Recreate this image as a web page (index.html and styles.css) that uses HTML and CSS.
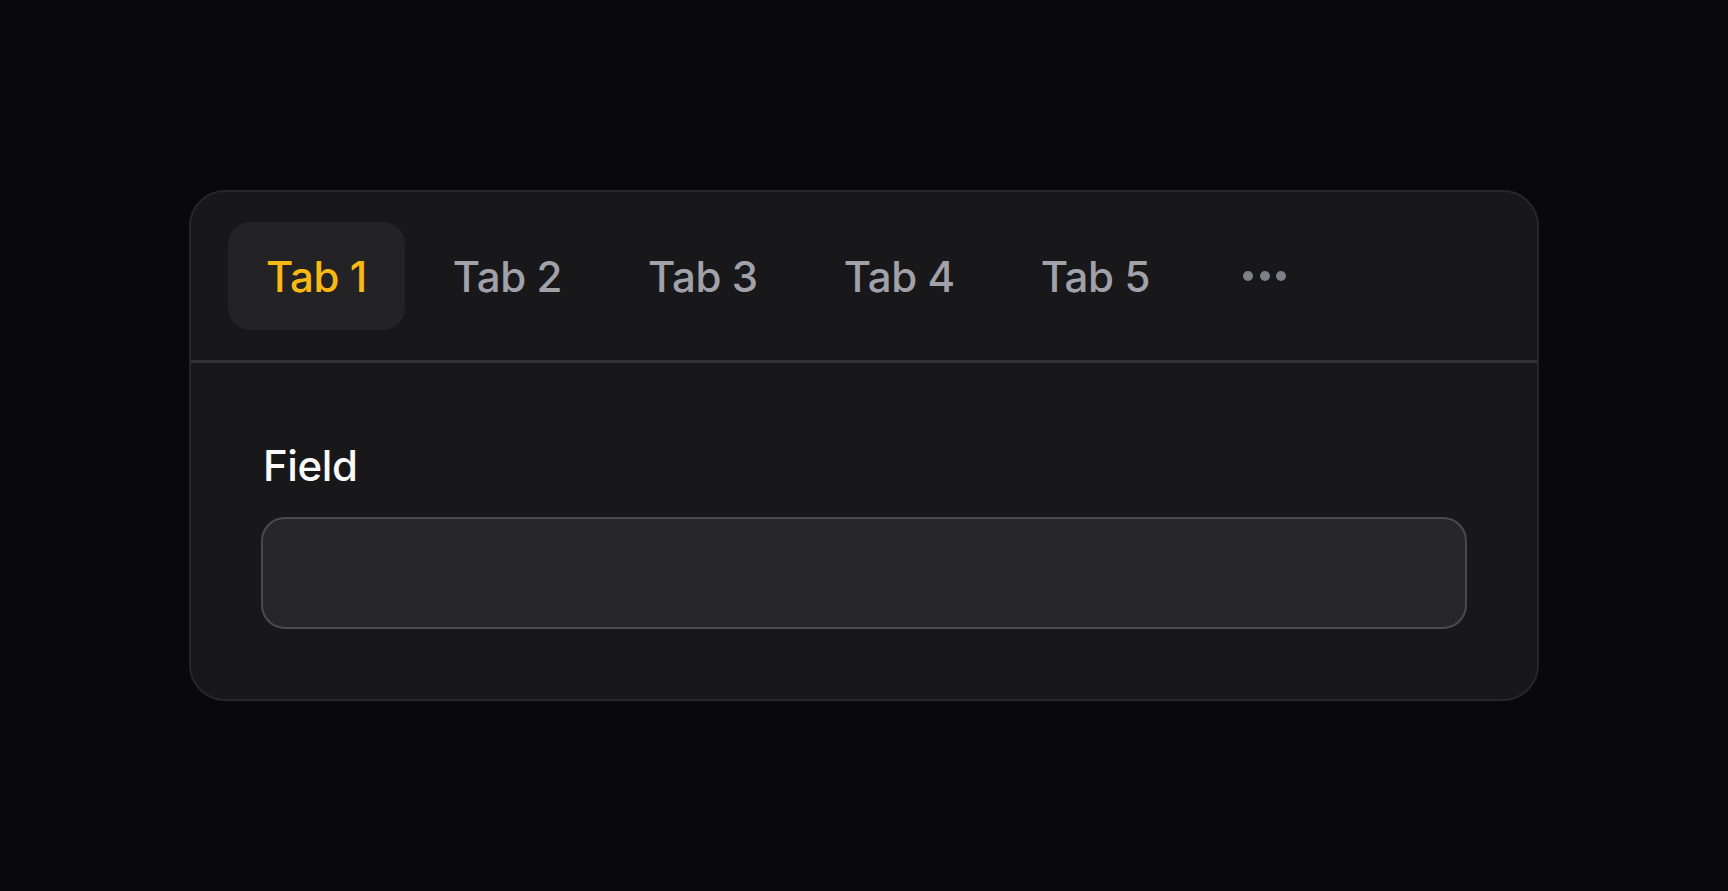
FILE: index.html
```html
<!DOCTYPE html>
<html lang="en">
<head>
    <meta charset="UTF-8">
    <meta name="viewport" content="width=device-width, initial-scale=1.0">
    <title>Tabs</title>
    <link rel="stylesheet" href="styles.css">
</head>
<body>
    <main class="wrapper">
        <section class="card">
            <nav class="tab-list" role="tablist">
                <button class="tab active" role="tab">Tab 1</button>
                <button class="tab" role="tab">Tab 2</button>
                <button class="tab" role="tab">Tab 3</button>
                <button class="tab" role="tab">Tab 4</button>
                <button class="tab" role="tab">Tab 5</button>
                <button class="tab more" aria-label="More tabs">
                    <svg width="56" height="20" viewBox="0 0 56 20">
                        <circle cx="12" cy="10" r="5" />
                        <circle cx="29" cy="10" r="5" />
                        <circle cx="45" cy="10" r="5" />
                    </svg>
                </button>
            </nav>

            <div class="panel">
                <label for="field" class="field-label">Field</label>
                <input type="text" id="field" class="field-input">
            </div>
        </section>
    </main>
</body>
</html>
```

FILE: styles.css
```css
/* Page */
body {
    margin: 0;
    height: 100vh;
    background-color: #09090b;
    font-family: Inter, "Noto Sans", sans-serif;
}

/* Centers the card in the window */
.wrapper {
    height: 100%;
    display: flex;
    align-items: center;
    justify-content: center;
}

.card {
    width: 1350px;
    box-sizing: border-box;
    background-color: #18181b;
    border: 2px solid #27272a;
    border-radius: 36px;
}

/* Tab strip */
.tab-list {
    display: flex;
    align-items: center;
    gap: 10px;
    padding: 30px 37px;
    border-bottom: 3px solid #333336;
}

.tab {
    height: 108px;
    padding: 0 38px;
    border: none;
    border-radius: 22px;
    background: none;
    color: #a1a1aa;
    font-family: inherit;
    font-size: 42px;
    font-weight: 500;
    letter-spacing: -0.4px;
    cursor: pointer;
}

.tab.active {
    background-color: #232326;
    color: #f8b912;
}

.tab.more {
    display: flex;
    align-items: center;
}

.tab.more svg {
    fill: #7f7f88;
}

/* Panel with the field */
.panel {
    display: flex;
    flex-direction: column;
    padding: 70px;
}

.field-label {
    color: #fafafa;
    font-size: 42px;
    font-weight: 500;
    letter-spacing: -0.4px;
    line-height: 66px;
    padding-left: 2px;
    margin-bottom: 18px;
}

.field-input {
    height: 112px;
    box-sizing: border-box;
    background-color: #27272a;
    border: 2px solid #4a4a4f;
    border-radius: 24px;
    color: #fafafa;
    font-family: inherit;
    font-size: 40px;
    padding: 0 32px;
    outline: none;
}
```
